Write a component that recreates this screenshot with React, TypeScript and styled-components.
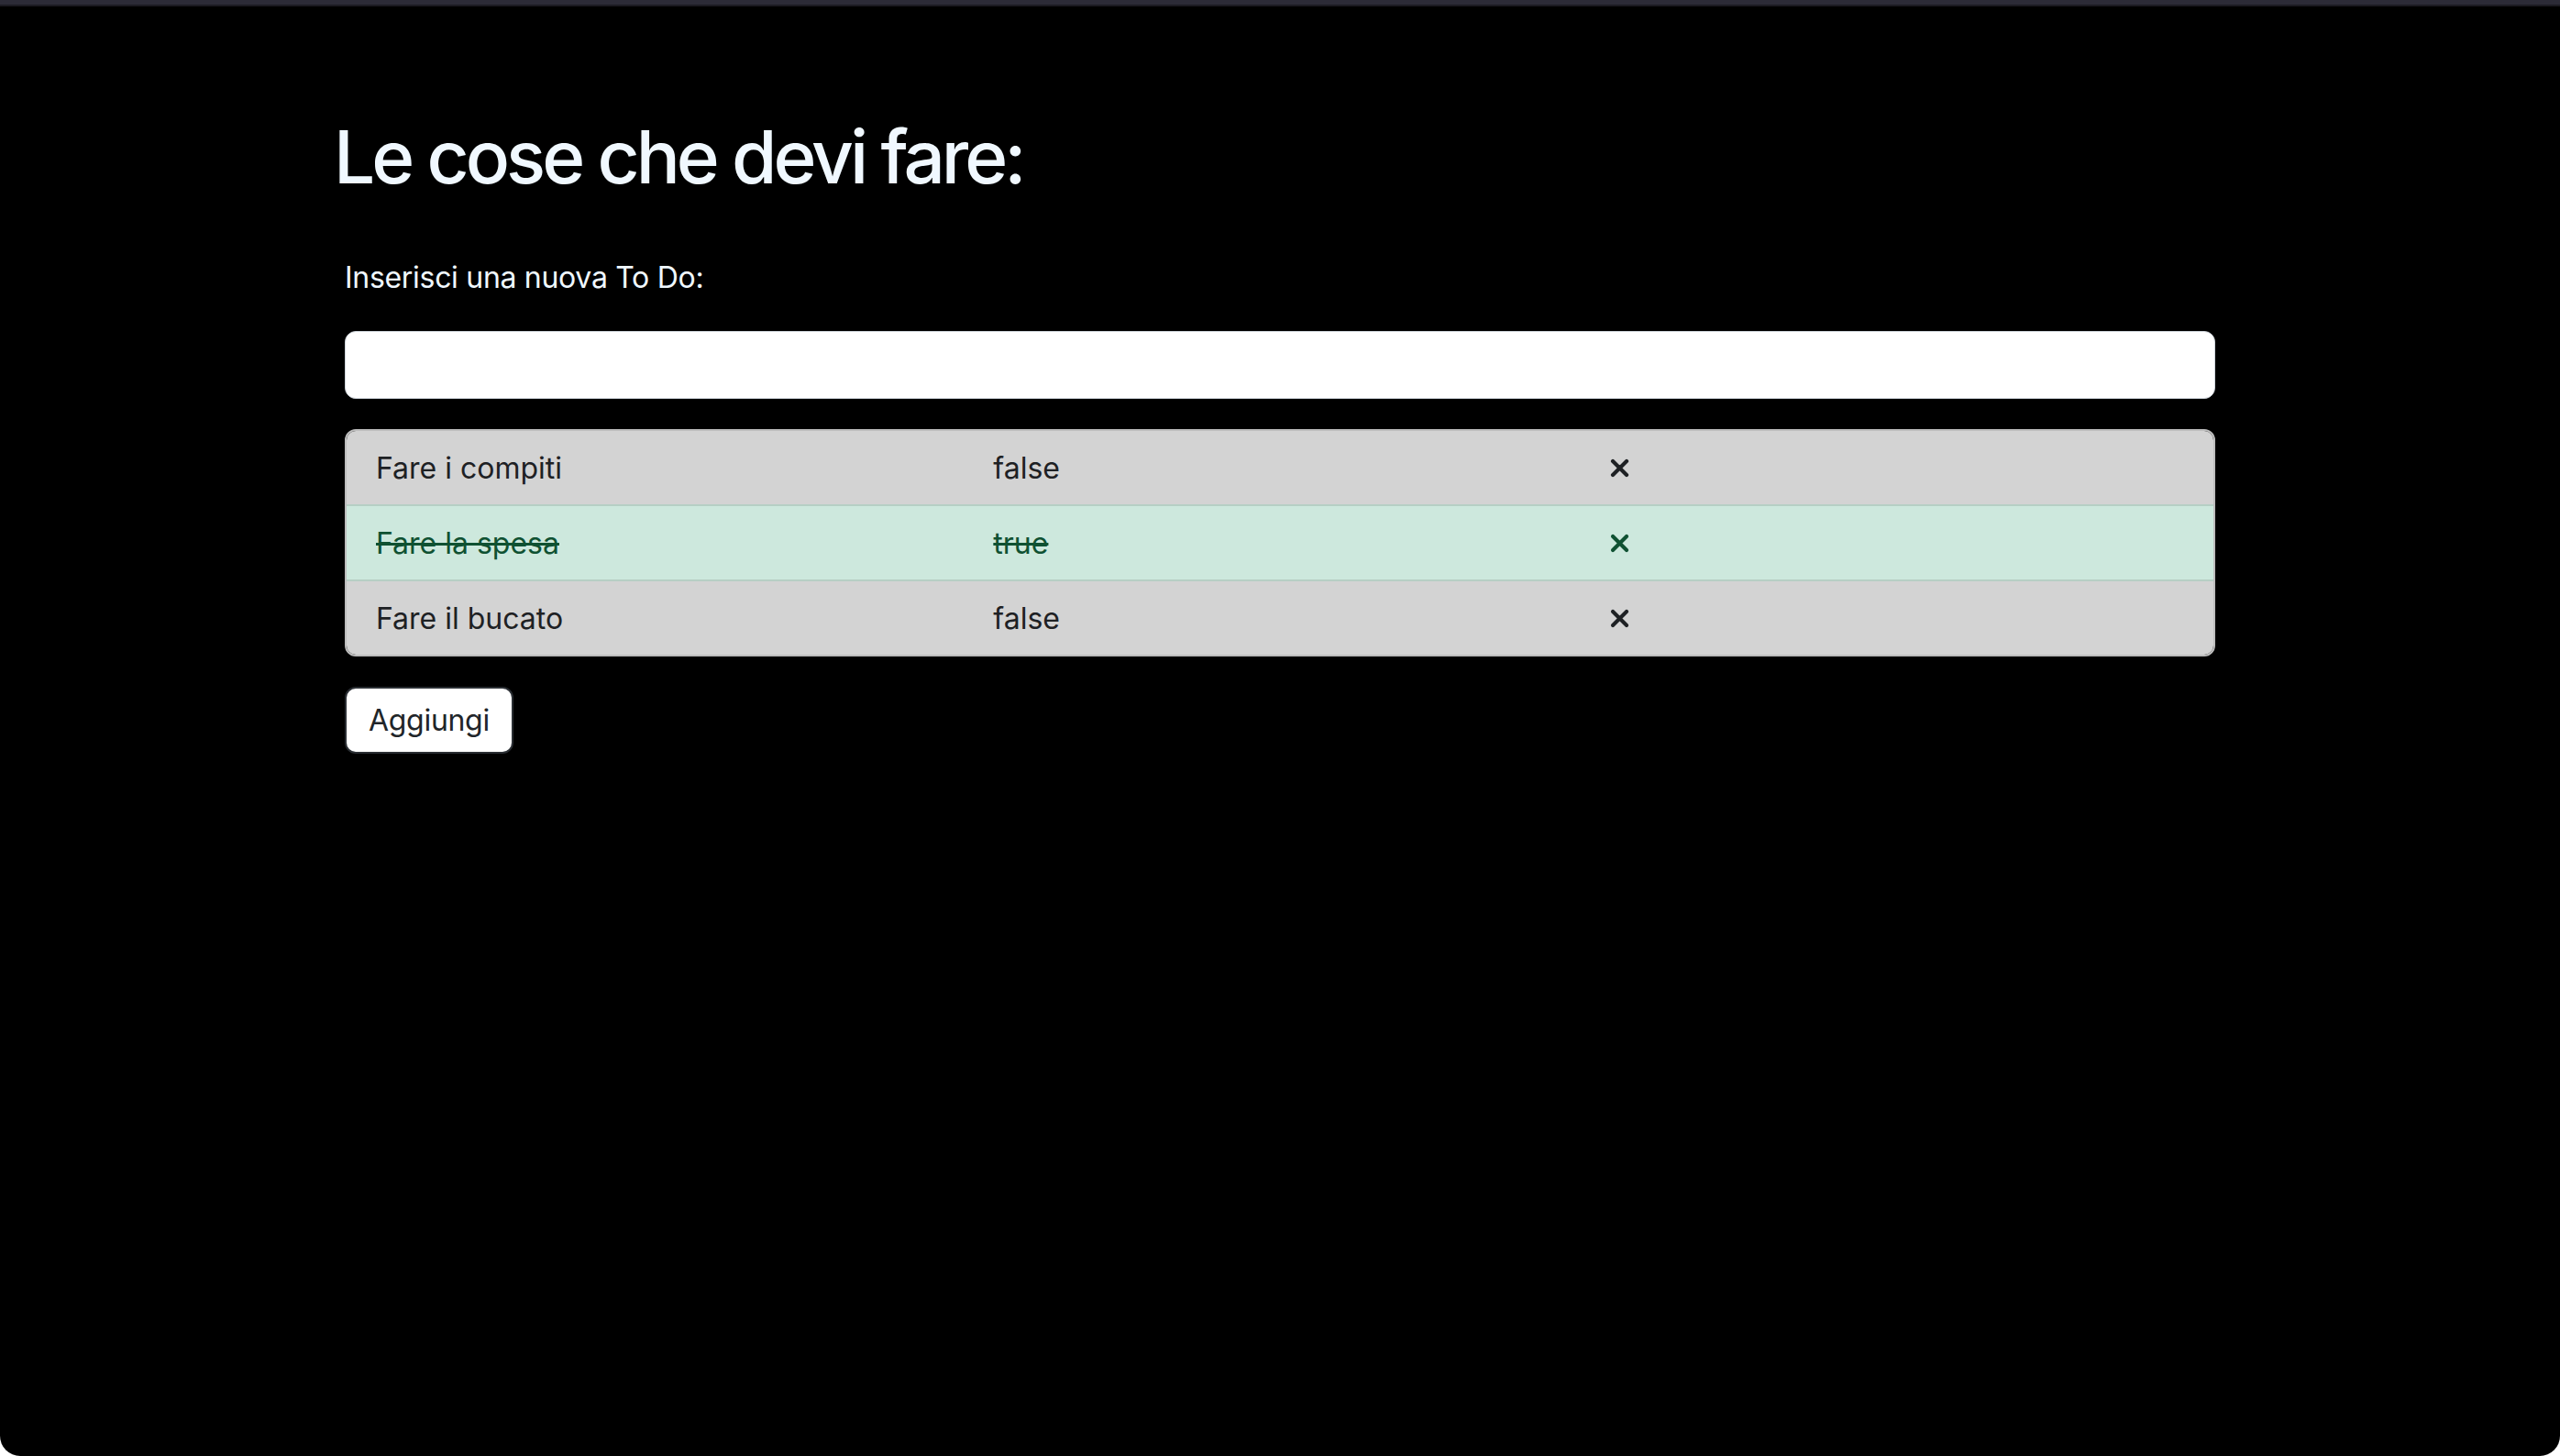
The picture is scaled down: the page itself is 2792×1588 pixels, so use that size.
import React from "react";
import styled, { createGlobalStyle } from "styled-components";

const GlobalStyle = createGlobalStyle`
  html, body {
    margin: 0;
    padding: 0;
    background: #ffffff;
  }
  body {
    font-family: Inter, "Noto Sans", "Liberation Sans", sans-serif;
    -webkit-font-smoothing: antialiased;
  }
  * { box-sizing: border-box; }
`;

const Window = styled.div`
  min-height: 1588px;
  background: #000000;
  border-radius: 0 0 22px 22px;
  overflow: hidden;
  display: flex;
  flex-direction: column;
`;

const TitleStrip = styled.div`
  height: 7px;
  background: #2c2b37;
  border-bottom: 2px solid #1b1a21;
`;

const Container = styled.main`
  width: 2064px;
  margin: 0 auto;
  padding-top: 116px;
  display: flex;
  flex-direction: column;
`;

const Heading = styled.h1`
  margin: 0 0 60px 0;
  font-size: 80px;
  line-height: 96px;
  font-weight: 500;
  letter-spacing: -4px;
  color: #f0f8ff;
`;

const Form = styled.div`
  padding: 0 12px;
  display: flex;
  flex-direction: column;
  gap: 33px;
`;

const Field = styled.div`
  display: flex;
  flex-direction: column;
  gap: 34px;
`;

const Label = styled.label`
  font-size: 32px;
  line-height: 48px;
  letter-spacing: -0.3px;
  color: #f0f8ff;
`;

const TextInput = styled.input`
  display: block;
  width: 100%;
  height: 74px;
  padding: 12px 24px;
  font: inherit;
  font-size: 32px;
  line-height: 48px;
  color: #212529;
  background: #ffffff;
  border: 1px solid #ced4da;
  border-radius: 12px;
  outline: none;
`;

const List = styled.ul`
  list-style: none;
  margin: 0;
  padding: 0;
  border: 2px solid #bdbdbd;
  border-radius: 12px;
  overflow: hidden;
`;

const Item = styled.li<{ $done: boolean }>`
  display: grid;
  grid-template-columns: repeat(3, 1fr);
  column-gap: 48px;
  align-items: center;
  padding: 17px 32px 15px;
  font-size: 32px;
  line-height: 48px;
  background: ${(p) => (p.$done ? "#cde8dd" : "#d3d3d3")};
  color: ${(p) => (p.$done ? "#0f5132" : "#1e2124")};
  & + & {
    border-top: 2px solid ${(p) => (p.$done ? "#b6cfc4" : "#bcbcbc")};
  }
`;

const Cell = styled.span<{ $strike: boolean }>`
  text-decoration: ${(p) => (p.$strike ? "line-through" : "none")};
  text-decoration-thickness: 3px;
`;

const RemoveIcon = styled.svg`
  display: block;
  width: 21px;
  height: 21px;
  margin-left: -1px;
  margin-top: -2px;
`;

const Actions = styled.div`
  display: flex;
`;

const Button = styled.button`
  font: inherit;
  font-size: 32px;
  line-height: 47px;
  letter-spacing: -0.3px;
  padding: 11px 24px;
  color: #212529;
  background: #ffffff;
  border: 2px solid #2a2e33;
  border-radius: 12px;
  cursor: pointer;
`;

type Todo = { text: string; done: boolean };

const todos: Todo[] = [
  { text: "Fare i compiti", done: false },
  { text: "Fare la spesa", done: true },
  { text: "Fare il bucato", done: false },
];

const XMark = () => (
  <RemoveIcon viewBox="0 0 21 21" aria-hidden="true">
    <path
      d="M3 3 L18 18 M18 3 L3 18"
      stroke="currentColor"
      strokeWidth="4.2"
      strokeLinecap="round"
      fill="none"
    />
  </RemoveIcon>
);

export default function App() {
  return (
    <>
      <GlobalStyle />
      <Window>
        <TitleStrip />
        <Container>
          <Heading>Le cose che devi fare:</Heading>
          <Form>
            <Field>
              <Label htmlFor="todo">Inserisci una nuova To Do:</Label>
              <TextInput id="todo" type="text" />
            </Field>
            <List>
              {todos.map((t) => (
                <Item key={t.text} $done={t.done}>
                  <Cell $strike={t.done}>{t.text}</Cell>
                  <Cell $strike={t.done}>{String(t.done)}</Cell>
                  <XMark />
                </Item>
              ))}
            </List>
            <Actions>
              <Button type="button">Aggiungi</Button>
            </Actions>
          </Form>
        </Container>
      </Window>
    </>
  );
}
